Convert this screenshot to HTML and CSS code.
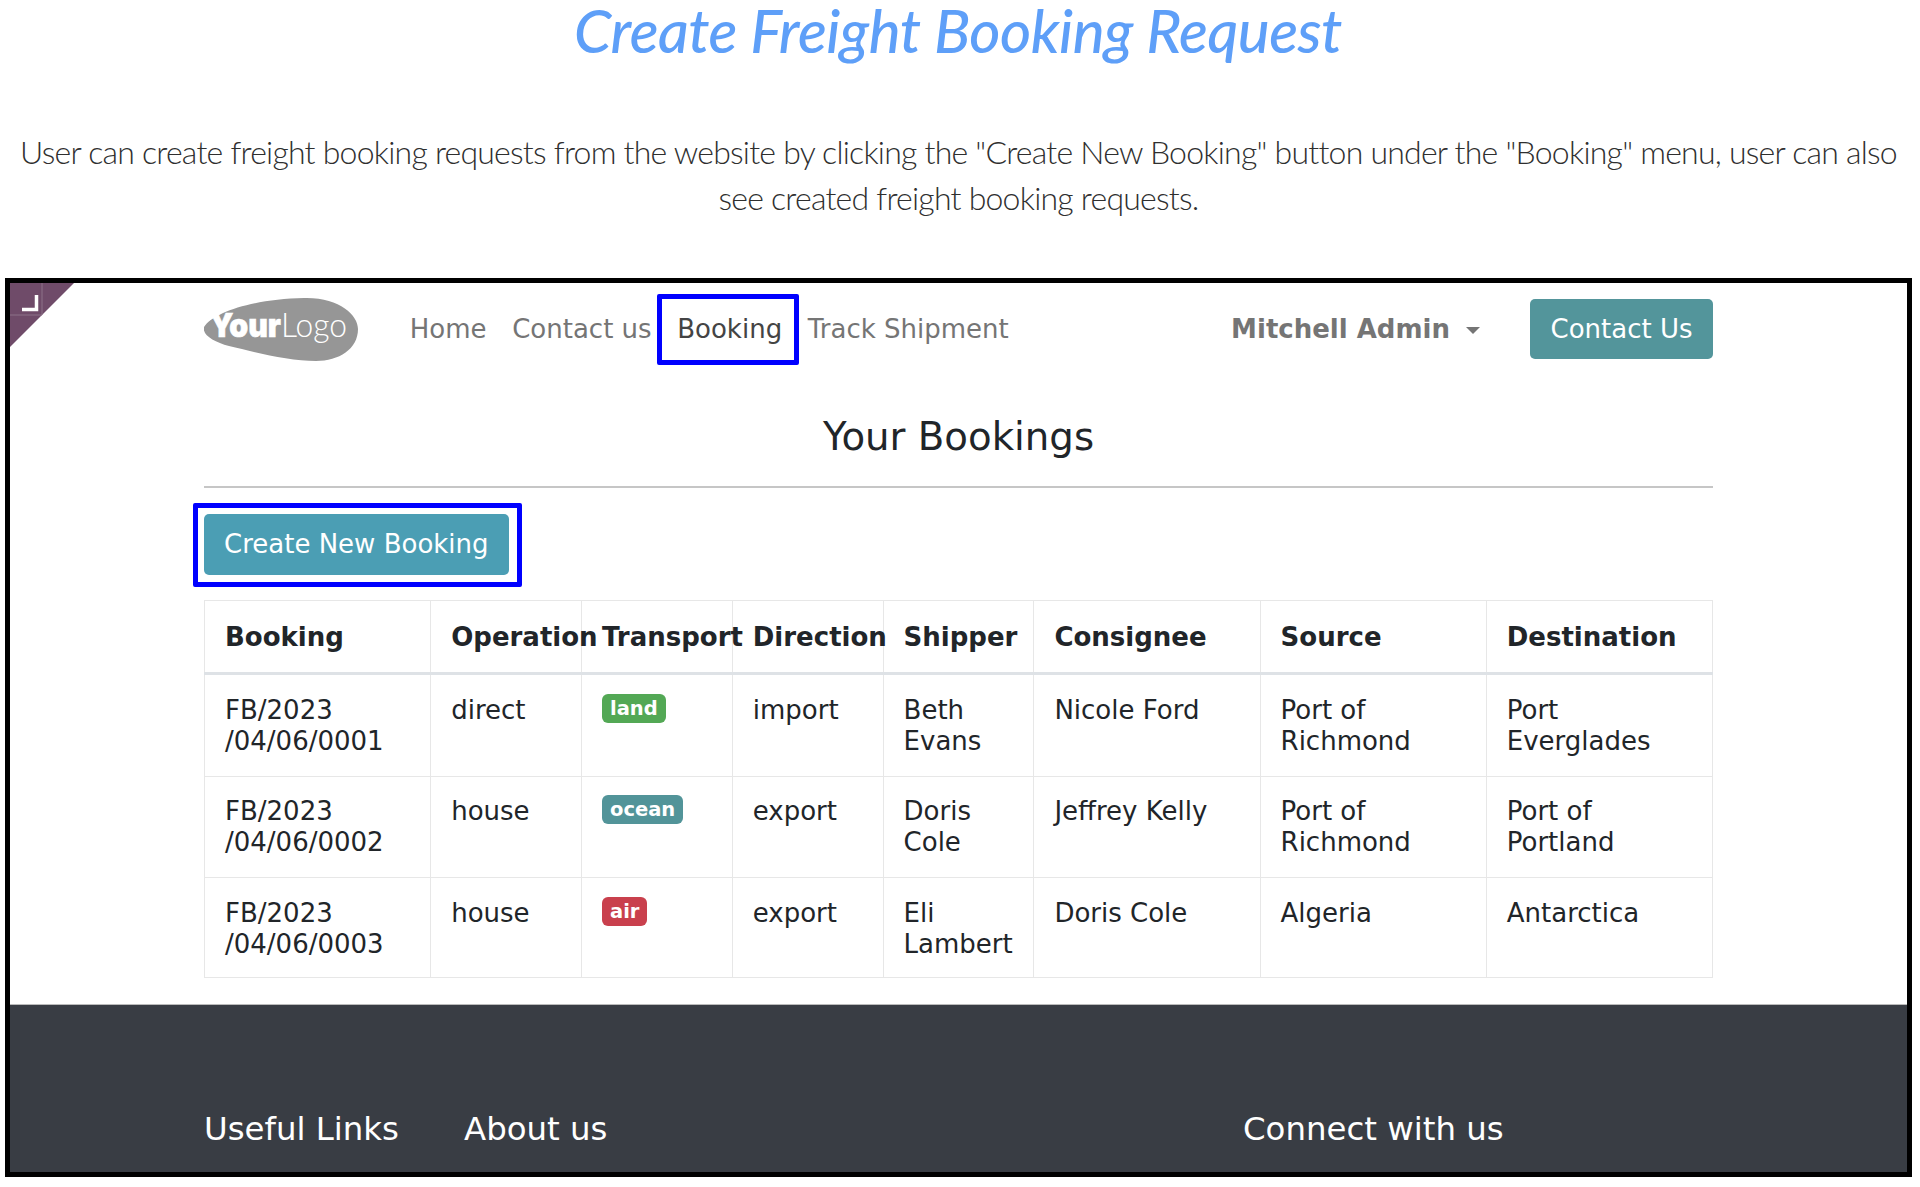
FILE: index.html
```html
<!DOCTYPE html>
<html lang="en">
<head>
  <meta charset="UTF-8">
  <title>Create Freight Booking Request</title>
  <link rel="stylesheet" href="styles.css">
</head>
<body>
  <h1 class="title">Create Freight Booking Request</h1>
  <p class="intro">User can create freight booking requests from the website by clicking the "Create New Booking" button under the "Booking" menu, user can also see created freight booking requests.</p>

  <div class="frame">
    <svg class="corner" width="64" height="64" viewBox="0 0 64 64">
      <polygon points="0,0 64,0 0,64" fill="#6f4b69"/>
      <path d="M32 0V32M0 32H32" stroke="#8d7389" stroke-width="1" fill="none"/>
      <path d="M12 26.500H26.500V12" stroke="#fff" stroke-width="3.500" fill="none"/>
    </svg>

    <header class="container nav">
      <svg class="logo" width="154" height="65" viewBox="0 0 154 65">
        <path d="M0 30C10 15 50 2 100 1C135 0 154 18 154 32C154 52 135 64 112 64C85 64 50 55 25 49C10 45 -2 38 0 30Z" fill="#969696"/>
        <text class="logo-your" x="6" y="40" textLength="71" lengthAdjust="spacingAndGlyphs">Your</text>
        <text class="logo-logo" x="77" y="40" textLength="66" lengthAdjust="spacingAndGlyphs">Logo</text>
      </svg>
      <a class="nav-link">Home</a>
      <a class="nav-link">Contact us</a>
      <a class="nav-link active">Booking</a>
      <a class="nav-link">Track Shipment</a>
      <a class="user">Mitchell Admin<span class="caret"></span></a>
      <a class="btn-contact">Contact Us</a>
    </header>

    <main class="container">
      <h2 class="page-title">Your Bookings</h2>
      <hr class="rule">
      <a class="btn-create">Create New Booking</a>
      <table class="bookings">
        <colgroup>
          <col class="col-wide"><col class="col-thin"><col class="col-thin"><col class="col-thin"><col class="col-thin"><col class="col-wide"><col class="col-wide"><col class="col-wide">
        </colgroup>
        <thead>
          <tr><th>Booking</th><th>Operation</th><th>Transport</th><th>Direction</th><th>Shipper</th><th>Consignee</th><th>Source</th><th>Destination</th></tr>
        </thead>
        <tbody>
          <tr>
            <td>FB/2023<br>/04/06/0001</td><td>direct</td><td><span class="badge land">land</span></td><td>import</td><td>Beth Evans</td><td>Nicole Ford</td><td>Port of Richmond</td><td>Port Everglades</td>
          </tr>
          <tr>
            <td>FB/2023<br>/04/06/0002</td><td>house</td><td><span class="badge ocean">ocean</span></td><td>export</td><td>Doris Cole</td><td>Jeffrey Kelly</td><td>Port of Richmond</td><td>Port of Portland</td>
          </tr>
          <tr>
            <td>FB/2023<br>/04/06/0003</td><td>house</td><td><span class="badge air">air</span></td><td>export</td><td>Eli Lambert</td><td>Doris Cole</td><td>Algeria</td><td>Antarctica</td>
          </tr>
        </tbody>
      </table>
    </main>

    <footer class="footer">
      <div class="container footer-cols">
        <div>Useful Links</div>
        <div>About us</div>
        <div>Connect with us</div>
      </div>
    </footer>
  </div>
</body>
</html>
```
FILE: styles.css
```css
body{
  margin: 0;
  background-color: white;
  font-family: "DejaVu Sans", sans-serif;
  color: #212529;
}
.title{
  margin: 0;
  text-align: center;
  font-family: Lato, sans-serif;
  font-style: italic;
  font-weight: 500;
  font-size: 60px;
  line-height: 60px;
  letter-spacing: -0.500px;
  color: #5e9ff8;
  padding-right: 4px;
}
.intro{
  margin: 69px 8px 0 5px;
  padding: 0 5px;
  text-align: center;
  font-family: Lato, sans-serif;
  font-weight: 300;
  font-size: 32px;
  line-height: 46px;
  letter-spacing: -0.770px;
  color: #2f2f2f;
}
.frame{
  position: relative;
  box-sizing: border-box;
  height: 899px;
  margin: 57px 8px 10px 5px;
  border: 5px solid black;
  overflow: hidden;
}
.corner{
  position: absolute;
  left: 0;
  top: 0;
}
.container{
  width: 1509px;
  margin: 0 auto;
}
.nav{
  display: flex;
  align-items: center;
  padding: 14px 0;
  font-size: 26px;
  line-height: 31px;
  color: #757575;
}
.logo{
  margin-right: 39px;
}
.logo-your{
  font-family: Inter, sans-serif;
  font-weight: 900;
  font-size: 33px;
  fill: white;
  stroke: white;
  stroke-width: 0.600px;
}
.logo-logo{
  font-family: Lato, sans-serif;
  font-weight: 300;
  font-size: 34px;
  fill: white;
}
.nav-link{
  position: relative;
  padding: 0 12.800px;
}
.nav-link.active{
  color: #444;
}
.nav-link.active::after{
  content: "";
  position: absolute;
  left: -7px;
  right: -4px;
  top: -20px;
  bottom: -20px;
  border: 5px solid #0000ff;
  border-radius: 2px;
}
.user{
  margin-left: auto;
  font-weight: bold;
}
.caret{
  display: inline-block;
  margin-left: 16px;
  vertical-align: 4px;
  border-top: 7px solid #757575;
  border-left: 7.500px solid transparent;
  border-right: 7.500px solid transparent;
}
.btn-contact{
  margin: 0 0 2px 50px;
  padding: 15px 20.500px 14px;
  background-color: #53959b;
  border-radius: 5px;
  color: white;
}
.page-title{
  margin: 38px 0 0;
  text-align: center;
  font-weight: normal;
  font-size: 38.700px;
  line-height: 46px;
}
.rule{
  height: 2px;
  margin: 26px 0 26px;
  border: none;
  background-color: #c6c6c6;
}
.btn-create{
  position: relative;
  display: inline-block;
  padding: 15px 20px;
  background-color: #4b9eb4;
  border-radius: 5px;
  color: white;
  font-size: 26px;
  line-height: 31px;
}
.btn-create::after{
  content: "";
  position: absolute;
  left: -11px;
  right: -13px;
  top: -11px;
  bottom: -12px;
  border: 5px solid #0000ff;
  border-radius: 2px;
}
.bookings{
  width: 100%;
  margin: 25px 0 26px;
  border-collapse: collapse;
  table-layout: fixed;
  font-size: 26px;
  line-height: 31px;
}
.col-wide{
  width: 15%;
}
.col-thin{
  width: 10%;
}
.bookings th,
.bookings td{
  padding: 19.500px 20px 19px;
  border: 1px solid #e7e7e7;
  text-align: left;
  vertical-align: top;
}
.bookings th{
  padding: 20.500px 20px 19.500px;
  border-bottom: 3px solid #dee2e6;
  white-space: nowrap;
}
.bookings tbody tr:last-child td{
  padding-bottom: 17px;
}
.badge{
  display: inline-block;
  margin-top: -1px;
  padding: 0 8px;
  border-radius: 6px;
  color: white;
  font-size: 19.500px;
  font-weight: bold;
  line-height: 29px;
  vertical-align: top;
}
.land{
  background-color: #53a855;
}
.ocean{
  background-color: #529499;
}
.air{
  background-color: #c9404d;
}
.footer{
  height: 200px;
  padding-top: 104px;
  background-color: #393d44;
  border-top: 1px solid #bbb;
  color: white;
  font-size: 32.400px;
  line-height: 40px;
}
.footer-cols{
  display: grid;
  grid-template-columns: 260px 779px 1fr;
}
```
